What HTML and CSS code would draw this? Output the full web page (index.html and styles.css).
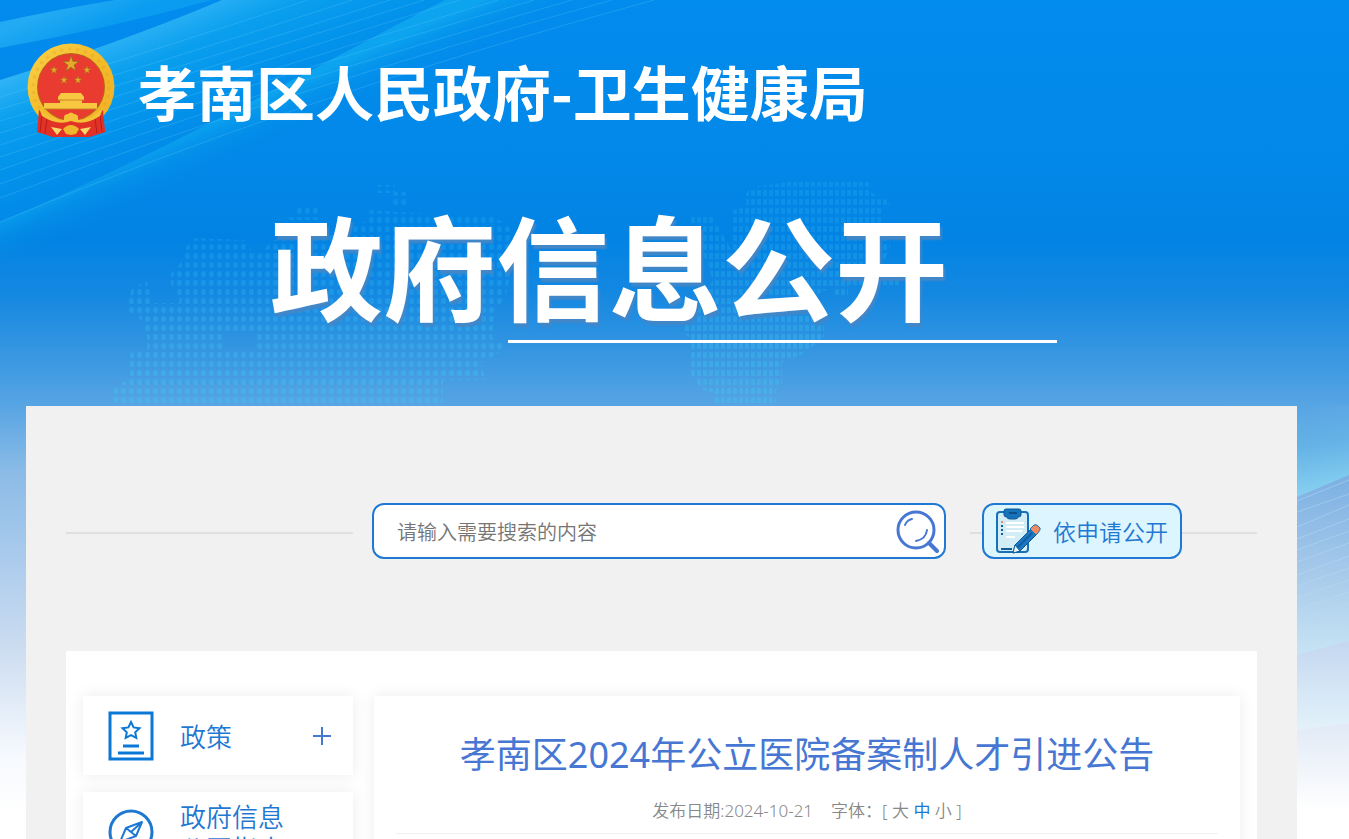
FILE: index.html
```html
<!DOCTYPE html>
<html lang="zh-CN">
<head>
<meta charset="utf-8">
<meta name="viewport" content="width=device-width, initial-scale=1">
<title>孝南区2024年公立医院备案制人才引进公告</title>
<link rel="stylesheet" href="styles.css">
</head>
<body>
<div class="page">
  <svg class="backdrop" viewBox="0 0 1349 839" preserveAspectRatio="xMidYMin slice" aria-hidden="true">
    <defs>
      <linearGradient id="sky" x1="0" y1="0" x2="0" y2="839" gradientUnits="userSpaceOnUse">
        <stop offset="0" stop-color="#028ced"/>
        <stop offset=".2" stop-color="#0288e8"/>
        <stop offset=".285" stop-color="#0283e4"/>
        <stop offset=".35" stop-color="#1488e1"/>
        <stop offset=".41" stop-color="#3194e1"/>
        <stop offset=".485" stop-color="#58a5e4"/>
        <stop offset=".56" stop-color="#8abbe6"/>
        <stop offset=".66" stop-color="#a9caec"/>
        <stop offset=".77" stop-color="#cbdcf0"/>
        <stop offset=".9" stop-color="#f6f9fe"/>
        <stop offset=".97" stop-color="#ffffff"/>
      </linearGradient>
      <linearGradient id="ribbonTop" x1="60" y1="8" x2="72" y2="38" gradientUnits="userSpaceOnUse">
        <stop offset="0" stop-color="#22aaf3"/>
        <stop offset="1" stop-color="#0a9cf0"/>
      </linearGradient>
      <linearGradient id="ribbonMid" x1="130" y1="30" x2="185" y2="165" gradientUnits="userSpaceOnUse">
        <stop offset="0" stop-color="#2db2f5"/>
        <stop offset=".25" stop-color="#0a9fee"/>
        <stop offset=".6" stop-color="#0292eb"/>
        <stop offset="1" stop-color="#0287e8"/>
      </linearGradient>
      <linearGradient id="ribbonLow" x1="165" y1="141" x2="185" y2="186" gradientUnits="userSpaceOnUse">
        <stop offset="0" stop-color="#0faaf0" stop-opacity=".8"/>
        <stop offset=".4" stop-color="#069cec" stop-opacity=".4"/>
        <stop offset="1" stop-color="#0288e8" stop-opacity="0"/>
      </linearGradient>
      <linearGradient id="glowRight" x1="1310" y1="405" x2="1325" y2="488" gradientUnits="userSpaceOnUse">
        <stop offset="0" stop-color="#58a5e4"/>
        <stop offset=".5" stop-color="#66b3e7"/>
        <stop offset="1" stop-color="#84ceef"/>
      </linearGradient>
      <linearGradient id="foldA" x1="0" y1="480" x2="0" y2="655" gradientUnits="userSpaceOnUse">
        <stop offset="0" stop-color="#7db1e3"/>
        <stop offset=".5" stop-color="#a5c8ea"/>
        <stop offset="1" stop-color="#c7e4f4"/>
      </linearGradient>
      <linearGradient id="foldB" x1="0" y1="645" x2="0" y2="730" gradientUnits="userSpaceOnUse">
        <stop offset="0" stop-color="#c5d8f0"/>
        <stop offset="1" stop-color="#e3f2fa"/>
      </linearGradient>
      <linearGradient id="foldC" x1="0" y1="725" x2="0" y2="810" gradientUnits="userSpaceOnUse">
        <stop offset="0" stop-color="#e1eaf6"/>
        <stop offset="1" stop-color="#ffffff"/>
      </linearGradient>
      <pattern id="dotsWide" width="8" height="9" patternUnits="userSpaceOnUse">
        <rect x="1" y="1" width="5" height="6" rx="2" fill="#3ccdf2"/>
      </pattern>
      <pattern id="dotsTight" width="6" height="9" patternUnits="userSpaceOnUse">
        <rect x="1" y="1" width="4" height="6" rx="1" fill="#3ccdf2"/>
      </pattern>
      <linearGradient id="fade" x1="0" y1="180" x2="0" y2="406" gradientUnits="userSpaceOnUse">
        <stop offset="0" stop-color="#ffffff" stop-opacity=".16"/>
        <stop offset=".4" stop-color="#ffffff" stop-opacity=".2"/>
        <stop offset="1" stop-color="#ffffff" stop-opacity=".34"/>
      </linearGradient>
      <mask id="mapMask" maskUnits="userSpaceOnUse" x="0" y="170" width="1349" height="240">
        <rect x="0" y="170" width="1349" height="240" fill="url(#fade)"/>
      </mask>
    </defs>
    <rect width="1349" height="839" fill="url(#sky)"/>
    <path d="M0 22Q60 9 115 0H212Q110 28 0 48Z" fill="url(#ribbonTop)"/>
    <path d="M0 80Q120 43 222 0H445C330 58 180 145 0 222Z" fill="url(#ribbonMid)"/>
    <path d="M0 222C180 145 330 58 445 0H640C440 60 250 150 0 290Z" fill="url(#ribbonLow)"/>
    <g fill="none" stroke="#6fd0fa" stroke-opacity=".24" stroke-width="1">
      <path d="M0 222Q300 96 654 0"/>
      <path d="M0 198Q280 92 612 0"/>
      <path d="M0 184Q270 86 572 0"/>
      <path d="M0 170Q250 82 534 0"/>
      <path d="M0 157Q240 78 498 0"/>
      <path d="M0 145Q220 74 460 0"/>
      <path d="M0 133Q200 70 424 0"/>
      <path d="M0 121Q190 64 390 0"/>
      <path d="M0 109Q170 60 352 0"/>
      <path d="M0 97Q150 52 308 0"/>
    </g>
    <g fill-rule="evenodd" mask="url(#mapMask)">
      <path fill="url(#dotsWide)" d="M195 238L245 240L256 257L273 240L330 235L369 220V210L430 214L475 215H490L505 223L520 240L505 297L494 313L492 337L505 342L499 353L481 363L485 380H443V405H114V388L130 378V353L147 348V335L139 317L126 312V305L132 288L147 281L152 303H179V297L171 287V273L179 265L186 247ZM223 333V350H256V333Z"/>
      <path fill="url(#dotsWide)" d="M375 185H395V192H408V208H390V193H375ZM295 207H321V220H287V214H295Z"/>
      <path fill="url(#dotsTight)" d="M789 182H871V192L890 202V207H882V227L890 238V247L882 267L900 280V285H848V298H835L832 287L800 303L824 323V337L806 352L782 363V383L776 390V405H715V393L702 390L689 373V337L683 333V323L696 313L713 280L689 217H713L733 253V210L746 207V193L752 187Z"/>
    </g>
    <path d="M1230 405H1349V475L1297 497L1230 525Z" fill="url(#glowRight)"/>
    <path d="M1230 525L1297 497L1349 475V641L1230 674Z" fill="url(#foldA)"/>
    <g fill="none" stroke="#b9e0f5" stroke-opacity=".45" stroke-width="1">
      <path d="M1297 501L1349 480M1297 512L1349 494M1297 527L1349 505M1297 539L1349 519M1297 550L1349 531M1297 562L1349 543M1297 575L1349 556M1297 586L1349 568M1297 598L1349 580M1297 610L1349 592M1297 621L1349 604M1297 633L1349 616"/>
    </g>
    <path d="M1230 674L1297 655L1349 641V723L1230 739Z" fill="url(#foldB)"/>
    <path d="M1230 739L1297 730L1349 723V839H1230Z" fill="url(#foldC)"/>
  </svg>

  <header class="masthead">
    <div class="brand">
      <svg class="emblem" viewBox="0 0 88 96" role="img" aria-label="国徽">
        <defs>
          <linearGradient id="gold" x1="0" y1="0" x2="1" y2="1">
            <stop offset="0" stop-color="#fbd24a"/>
            <stop offset=".5" stop-color="#f3bb2a"/>
            <stop offset="1" stop-color="#f0b024"/>
          </linearGradient>
          <polygon id="star" points="0,-10 2.3,-3.1 9.5,-3.1 3.7,1.2 5.9,8.1 0,3.9 -5.9,8.1 -3.7,1.2 -9.5,-3.1 -2.3,-3.1"/>
        </defs>
        <path d="M14 66L10 89L17 91L26 94L44 92L62 94L71 91L78 89L74 66Z" fill="#df2f24"/>
        <circle cx="44" cy="44" r="43.500" fill="url(#gold)"/>
        <circle cx="44" cy="44" r="38" fill="none" stroke="#dc9a1d" stroke-width="3" stroke-dasharray="3 5" opacity=".3"/>
        <circle cx="44" cy="44" r="34" fill="#b8651a"/>
        <circle cx="44" cy="44" r="33" fill="#e93b2f"/>
        <path d="M12 67L28 76L44 78L60 76L76 67L78 89L71 91L62 94H26L17 91L10 89Z" fill="#e23126"/>
        <path d="M15 72L13 89M20 76L18 90M73 72L75 89M68 76L70 90" stroke="#b81d18" stroke-width="1" fill="none"/>
        <g fill="#e4aa2b" stroke="#a9641a" stroke-width="1">
          <use href="#star" transform="translate(44 21) scale(.86)"/>
          <use href="#star" transform="translate(27 27) scale(.42)"/>
          <use href="#star" transform="translate(60 27) scale(.42)"/>
          <use href="#star" transform="translate(37 37) scale(.42)"/>
          <use href="#star" transform="translate(51 37) scale(.42)"/>
        </g>
        <path d="M34 50H54L57 54V57H31V54ZM33 57H55V60H70V66H17V60H33Z" fill="#f8c842"/>
        <path d="M31 57H57M17 66H70" stroke="#c98520" stroke-width="1"/>
        <path d="M12 65Q25 77 37 77Q36 71 41 71Q44 68 47 71Q52 71 51 77Q63 77 76 65L73 73Q58 83 44 78Q30 83 15 73Z" fill="#f5c136"/>
        <path d="M24 84L35 86L30 92ZM64 84L53 86L58 92Z" fill="#f8d768"/>
        <path d="M36 86Q44 78 52 86L49 91L44 92L39 91Z" fill="#efb52b"/>
      </svg>
      <h1 class="brand-name">孝南区人民政府-卫生健康局</h1>
    </div>
    <p class="banner">政府信息公开</p>
    <div class="banner-rule"></div>
  </header>

  <main class="shell">
    <form class="search-row">
      <span class="rule rule-grow"></span>
      <div class="search-box">
        <input class="search-input" type="text" aria-label="搜索" placeholder="请输入需要搜索的内容">
        <button class="search-button" type="button" aria-label="搜索">
          <svg viewBox="0 0 44 44" width="44" height="44" fill="none" stroke="#4777d3" stroke-linecap="round">
            <circle cx="21" cy="21" r="18" stroke-width="3"/>
            <path d="M34 34L42 42" stroke-width="4"/>
            <path d="M10 16Q12 11 17 10M32 21Q31 30 21 32" stroke-width="2"/>
          </svg>
        </button>
      </div>
      <span class="rule rule-short"></span>
      <a class="apply" href="#">
        <svg viewBox="0 0 46 46" width="46" height="46" aria-hidden="true">
          <rect x="2" y="4" width="31" height="40" rx="3" fill="#d3edf6" stroke="#1672b8" stroke-width="2"/>
          <path d="M9 3Q9 1 11 1H24Q26 1 26 3V7Q26 9 23 9Q23 11 20 11H15Q12 11 12 9Q9 9 9 7Z" fill="#1673b8" stroke="#0c5a9c"/>
          <path d="M14 5H22" stroke="#0c4f8a" stroke-width="2"/>
          <path d="M11 15H29M11 19H29M11 23H27M11 29H20" stroke="#ffffff" stroke-width="2"/>
          <path d="M6 14H8" stroke="#f08a62" stroke-width="2"/>
          <path d="M6 18H8M6 22H8M6 26H8M6 41H17" stroke="#145c94" stroke-width="2"/>
          <path d="M20 37L37 20L43 25L25 43L18 45Z" fill="#1d78c1" stroke="#0d5594"/>
          <path d="M22 40L37 25" stroke="#0d5fa4" stroke-width="2"/>
          <path d="M18 45L20 37L25 43Z" fill="#e9f8ff" stroke="#145c94"/>
          <path d="M35 21L39 17Q41 16 43 18L45 20Q46 22 41 27Z" fill="#f08a62" stroke="#1672b8"/>
        </svg>
        <span>依申请公开</span>
      </a>
      <span class="rule rule-end"></span>
    </form>

    <div class="panel">
      <nav class="side">
        <a class="card" href="#">
          <svg class="card-icon" viewBox="0 0 46 50" width="46" height="50" fill="none" stroke="#0a78d6">
            <rect x="2" y="2" width="42" height="46" stroke-width="3"/>
            <path d="M23 11L25.600 16.400L31.500 17.200L27.200 21.300L28.300 27L23 24.200L17.700 27L18.800 21.300L14.500 17.200L20.400 16.400Z" stroke-width="2"/>
            <path d="M15 35H31M10 42H36" stroke-width="3"/>
          </svg>
          <span class="card-label">政策</span>
          <svg class="plus" viewBox="0 0 18 18" width="18" height="18" stroke="#4777d3" stroke-width="2"><path d="M0 9H18M9 0V18"/></svg>
        </a>
        <a class="card" href="#">
          <svg class="card-icon" viewBox="0 0 46 46" width="46" height="46" fill="none" stroke="#1e78d2" stroke-width="3">
            <circle cx="23" cy="23" r="21"/>
            <path d="M34 13L28 27L12 33L18 19ZM18 19L28 27M34 13L23 23" stroke-width="2" stroke-linejoin="round"/>
          </svg>
          <span class="card-label">政府信息<br>公开指南</span>
        </a>
      </nav>
      <article class="article">
        <h2 class="article-title">孝南区2024年公立医院备案制人才引进公告</h2>
        <div class="meta">
          <span>发布日期:2024-10-21</span>
          <span class="sizes">字体：[ <a href="#">大</a> <a class="active" href="#">中</a> <a href="#">小</a> ]</span>
        </div>
      </article>
    </div>
  </main>
</div>
</body>
</html>
```
FILE: styles.css
```css
* {
  box-sizing: border-box;
}

body {
  margin: 0;
  font-family: "Noto Sans", "Noto Sans CJK SC", sans-serif;
  color: #1f78d1;
}

a {
  color: inherit;
  text-decoration: none;
}

.page {
  position: relative;
  display: flex;
  flex-direction: column;
  height: 100vh;
  overflow: hidden;
}

.backdrop {
  position: absolute;
  inset: 0;
  z-index: -1;
  width: 100%;
  height: 100%;
}

.masthead {
  flex: none;
  height: 406px;
  padding: 42px 26px 0;
  color: #ffffff;
}

.brand {
  display: flex;
  align-items: center;
  gap: 22px;
  height: 98px;
}

.emblem {
  flex: none;
  width: 90px;
  height: 96px;
}

.brand-name {
  margin: 0;
  font: 700 59px/96px "Noto Sans CJK SC", sans-serif;
  white-space: nowrap;
}

.banner {
  margin: 46px 0 0 244px;
  font: 700 113px/154px "Noto Sans CJK SC", sans-serif;
  white-space: nowrap;
  text-shadow: 2px 4px 2px #4287c8;
}

.banner-rule {
  width: 549px;
  height: 3px;
  margin-left: 482px;
  background: #ffffff;
}

.shell {
  flex: 1;
  margin: 0 52px 0 26px;
  padding: 97px 40px 0;
  background: #f1f1f1;
}

.search-row {
  display: flex;
  align-items: center;
  height: 56px;
}

.rule {
  height: 2px;
  margin-top: 4px;
  background: #e0e0e0;
}

.rule-grow {
  flex: 1;
  margin-right: 19px;
}

.rule-short {
  width: 12px;
  margin-left: 24px;
}

.rule-end {
  width: 75px;
}

.search-box {
  display: flex;
  align-items: center;
  width: 574px;
  height: 56px;
  padding: 0 5px 0 23px;
  background: #ffffff;
  border: 2px solid #1f78d1;
  border-radius: 12px;
}

.search-input {
  flex: 1;
  min-width: 0;
  height: 52px;
  padding: 0;
  border: 0;
  outline: 0;
  background: transparent;
  font: 350 20px "Noto Sans CJK SC", sans-serif;
  color: #333333;
}

.search-input::placeholder {
  color: #757575;
  opacity: 1;
}

.search-button {
  display: flex;
  padding: 0;
  border: 0;
  background: none;
}

.apply {
  display: flex;
  align-items: center;
  gap: 12px;
  width: 200px;
  height: 56px;
  padding-left: 11px;
  background: #dcf5ff;
  border: 2px solid #1f78d1;
  border-radius: 12px;
  font: 350 23px/56px "Noto Sans CJK SC", sans-serif;
  white-space: nowrap;
}

.panel {
  display: flex;
  gap: 21px;
  margin-top: 92px;
  padding: 45px 17px;
  background: #ffffff;
}

.side {
  display: flex;
  flex: none;
  flex-direction: column;
  gap: 17px;
  width: 270px;
}

.card {
  display: flex;
  align-items: center;
  min-height: 79px;
  padding: 0 22px 0 25px;
  background: #ffffff;
  box-shadow: 0 0 15px rgba(0, 0, 0, 0.08);
  font: 350 26px/32px "Noto Sans CJK SC", sans-serif;
}

.card-icon {
  flex: none;
  margin-right: 26px;
}

.card-label {
  flex: 1;
}

.article {
  flex: 1;
  min-width: 0;
  min-height: 400px;
  padding: 32px 22px 0;
  background: #ffffff;
  box-shadow: 0 0 15px rgba(0, 0, 0, 0.08);
}

.article-title {
  margin: 0;
  font-size: 36px;
  font-weight: 400;
  line-height: 54px;
  text-align: center;
  color: #4777d3;
}

.meta {
  display: flex;
  justify-content: center;
  gap: 18px;
  padding: 15px 0 9px;
  border-bottom: 1px solid #f0f0f0;
  font-size: 17px;
  font-weight: 350;
  line-height: 27px;
  color: #888888;
}

.active {
  color: #1f78d1;
  font-weight: 400;
}
```
